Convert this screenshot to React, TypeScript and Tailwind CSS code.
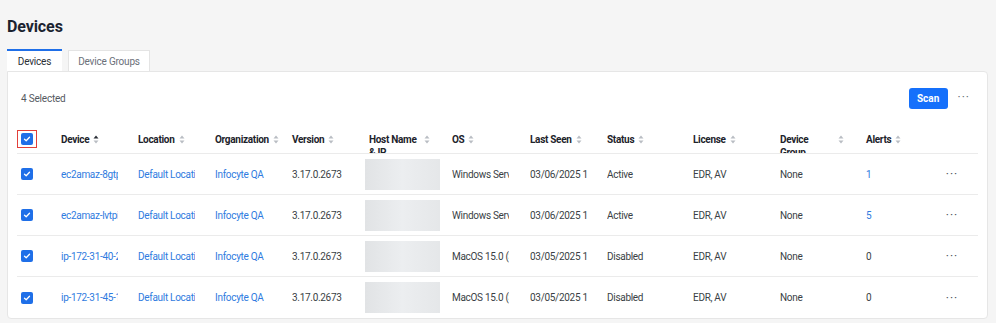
import React from "react";

type Row = {
  device: string;
  os: string;
  seen: string;
  status: string;
  alerts: string;
  alertLink: boolean;
};

const ROWS: Row[] = [
  { device: "ec2amaz-8gtpq2k", os: "Windows Server 2019", seen: "03/06/2025 10:41", status: "Active", alerts: "1", alertLink: true },
  { device: "ec2amaz-lvtpi7r", os: "Windows Server 2022", seen: "03/06/2025 10:12", status: "Active", alerts: "5", alertLink: true },
  { device: "ip-172-31-40-22", os: "MacOS 15.0 (Sequoia)", seen: "03/05/2025 16:03", status: "Disabled", alerts: "0", alertLink: false },
  { device: "ip-172-31-45-17", os: "MacOS 15.0 (Sequoia)", seen: "03/05/2025 15:58", status: "Disabled", alerts: "0", alertLink: false },
];

// checkbox, device, location, org, version, host, os, last seen, status, license, group, alerts, actions
const COLS = "grid grid-cols-[40px_77px_77px_77px_77px_83px_78px_77px_86px_87px_86px_78px_1fr]";

function SortIcon({ active }: { active?: boolean }) {
  return (
    <svg width="6" height="9" viewBox="0 0 6 9" className="shrink-0 mt-[2px]">
      <path d="M3 0.5 L5.5 3.5 L0.5 3.5 Z" fill={active ? "#2b2f36" : "#b9bdc3"} />
      <path d="M3 8.5 L5.5 5.5 L0.5 5.5 Z" fill="#b9bdc3" />
    </svg>
  );
}

function Check() {
  return (
    <span className="w-3 h-3 rounded-[2px] bg-[#1f6fe8] flex items-center justify-center">
      <svg width="8" height="8" viewBox="0 0 8 8">
        <path d="M1.5 4.2 L3.2 5.8 L6.5 2.3" stroke="white" strokeWidth="1.3" fill="none" strokeLinecap="round" strokeLinejoin="round" />
      </svg>
    </span>
  );
}

function Head({ label, active }: { label: string; active?: boolean }) {
  return (
    <div className="pl-1 pr-2 pt-[4px] flex items-start gap-[4px]">
      <span className="leading-[13px]">{label}</span>
      <SortIcon active={active} />
    </div>
  );
}

// header whose label wraps onto a second (clipped) line
function WrapHead({ first, second, textW }: { first: string; second: string; textW: string }) {
  return (
    <div className="pl-1 pt-[4px] flex items-start">
      <span className={`${textW} leading-[13px] whitespace-nowrap`}>
        {first}
        <br />
        {second}
      </span>
      <SortIcon />
    </div>
  );
}

function Cell({ children, link }: { children: React.ReactNode; link?: boolean }) {
  return (
    <div className="pl-1 flex items-center">
      <div className={`w-[57px] overflow-hidden whitespace-nowrap ${link ? "text-[#2f7be0]" : "text-[#3a3f45]"}`}>
        {children}
      </div>
    </div>
  );
}

export default function App() {
  return (
    <div
      className="min-h-[323px] bg-[#f5f5f5] pl-[7px] pr-[8px] pt-[15px]"
      style={{ fontFamily: "Roboto, 'Liberation Sans', sans-serif" }}
    >
      <h1 className="text-[16px] leading-6 font-bold text-[#1b2330] tracking-[-0.1px]">Devices</h1>

      {/* Tabs */}
      <div className="mt-[10px] flex items-end gap-[6px] text-[10px] tracking-[-0.2px]">
        <div className="h-[22px] w-[55px] bg-white border-t-2 border-[#1f6fe8] flex items-center justify-center text-[#2b2f36]">
          Devices
        </div>
        <div className="h-[21px] w-[82px] bg-white border border-b-0 border-[#e4e4e4] flex items-center justify-center text-[#6b7079]">
          Device Groups
        </div>
      </div>

      {/* Card */}
      <div className="bg-white border border-[#e6e6e6] rounded-b-[4px] rounded-tr-[4px] h-[248px] overflow-hidden">
        <div className="flex items-center justify-between pl-[13px] pr-[17px] pt-[16px]">
          <span className="text-[10px] tracking-[-0.2px] text-[#555a61]">4 Selected</span>
          <div className="flex items-center gap-[10px]">
            <button className="h-[21px] w-[39px] rounded-[3px] bg-[#1570fb] text-white text-[10px] font-bold">
              Scan
            </button>
            <span className="text-[#6a6f76] text-[12px] leading-none tracking-[1px] pb-[4px]">···</span>
          </div>
        </div>

        <div className="px-[9px] mt-[20px] text-[10px] tracking-[-0.3px]">
          {/* Header */}
          <div className={`${COLS} h-[25px] overflow-hidden border-b border-[#ebebeb] font-bold text-[#1d232b]`}>
            <div className="flex justify-start">
              <div className="w-[20px] h-[18px] mt-[1px] border-[1.5px] border-[#e2403a] flex items-center justify-center">
                <Check />
              </div>
            </div>
            <Head label="Device" active />
            <Head label="Location" />
            <Head label="Organization" />
            <Head label="Version" />
            <WrapHead first="Host Name" second="& IP" textW="w-[55px]" />
            <Head label="OS" />
            <Head label="Last Seen" />
            <Head label="Status" />
            <Head label="License" />
            <WrapHead first="Device" second="Group" textW="w-[58px]" />
            <Head label="Alerts" />
            <div />
          </div>

          {/* Rows */}
          {ROWS.map((r, i) => (
            <div
              key={i}
              className={`${COLS} h-[41px] ${i < ROWS.length - 1 ? "border-b border-[#ebebeb]" : ""}`}
            >
              <div className="pl-1 flex items-center">
                <Check />
              </div>
              <Cell link>{r.device}</Cell>
              <Cell link>Default Location</Cell>
              <Cell link>Infocyte QA</Cell>
              <Cell>3.17.0.2673</Cell>
              <div className="flex items-center">
                <div className="w-[75px] h-[31px] bg-gradient-to-r from-[#e1e3e5] via-[#eceef0] to-[#e5e7e9]" />
              </div>
              <Cell>{r.os}</Cell>
              <Cell>{r.seen}</Cell>
              <Cell>{r.status}</Cell>
              <Cell>EDR, AV</Cell>
              <Cell>None</Cell>
              <Cell link={r.alertLink}>{r.alerts}</Cell>
              <div className="flex items-center justify-center pr-[14px] text-[#4f545b] text-[12px] tracking-[1px]">···</div>
            </div>
          ))}
        </div>
      </div>
    </div>
  );
}
